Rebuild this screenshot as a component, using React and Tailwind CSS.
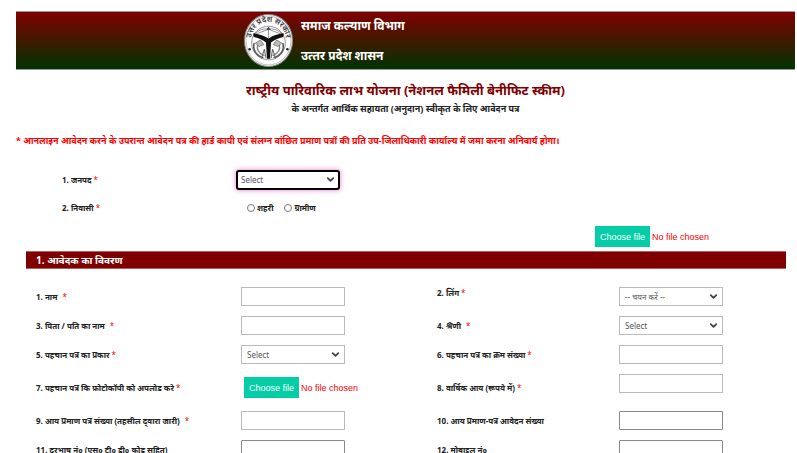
import { ChevronDown } from "lucide-react";

const rows = [
  {
    height: "h-[29px]",
    left: { id: "name", label: "1. नाम", required: true, wide: true, type: "text" },
    right: { id: "gender", label: "2. लिंग", required: true, labelTop: true, type: "select", option: "-- चयन करें --" },
  },
  {
    height: "h-[29px]",
    left: { id: "father", label: "3. पिता / पति का नाम", required: true, wide: true, type: "text" },
    right: { id: "category", label: "4. श्रेणी", required: true, wide: true, type: "select", option: "Select" },
  },
  {
    height: "h-[29px]",
    left: { id: "idType", label: "5. पहचान पत्र का प्रकार", required: true, type: "select", option: "Select" },
    right: { id: "idNumber", label: "6. पहचान पत्र का क्रम संख्या", required: true, type: "text" },
  },
  {
    height: "h-[37px]",
    left: { id: "idCopy", label: "7. पहचान पत्र कि फ़ोटोकॉपी को अपलोड करे", required: true, type: "file" },
    right: { id: "income", label: "8. वार्षिक आय (रूपये में)", required: true, controlTop: true, type: "text" },
  },
  {
    height: "h-[29px]",
    left: { id: "incomeCert", label: "9. आय प्रमाण पत्र संख्या (तहसील द्\u200cवारा जारी)", required: true, wide: true, type: "text" },
    right: { id: "incomeApp", label: "10. आय प्रमाण-पत्र आवेदन संख्या", type: "text", dark: true },
  },
  {
    height: "h-[29px]",
    left: { id: "phone", label: "11. दूरभाष नं० (एस० टी० डी० कोड सहित)", type: "text", dark: true },
    right: { id: "mobile", label: "12. मोबाइल नं०", type: "text", dark: true },
  },
];

function Emblem() {
  return (
    <svg viewBox="0 0 96 104" preserveAspectRatio="none" className="h-[53px] w-[49px] shrink-0" aria-hidden="true">
      <defs>
        <path id="ring" d="M15 60 A34 36 0 1 1 81 60" />
      </defs>
      <ellipse cx="48" cy="52" rx="47" ry="51" fill="#fff" stroke="#888" strokeWidth="2" />
      <ellipse cx="48" cy="52" rx="44" ry="48" fill="none" stroke="#888" strokeWidth="1" />
      <text fontSize="15" fontWeight="600" fill="#333" textAnchor="middle" fontFamily="Noto Sans, sans-serif">
        <textPath href="#ring" startOffset="50%">उत्तर प्रदेश सरकार</textPath>
      </text>
      <ellipse cx="48" cy="57" rx="33" ry="33" fill="#fff" stroke="#777" strokeWidth="1.5" />
      <path d="M19 41 Q34 26 48 30 Q62 26 77 41 M48 26 V48 M19 41 L48 30 L77 41" fill="none" stroke="#777" strokeWidth="1.5" />
      <path d="M44 31 L48 25 L52 31 Z" fill="#333" />
      <path d="M18 38 Q36 40 48 48 Q60 40 78 38 L77 45 Q62 48 53 56 L51 88 H45 L43 56 Q34 48 19 45 Z" fill="#111" />
      <path d="M20 57 C16 70 24 82 38 86" fill="none" stroke="#555" strokeWidth="3" />
      <path d="M27 60 C24 70 30 78 40 82" fill="none" stroke="#888" strokeWidth="3" />
      <path d="M76 57 C80 70 72 82 58 86" fill="none" stroke="#555" strokeWidth="3" />
      <path d="M69 60 C72 70 66 78 56 82" fill="none" stroke="#888" strokeWidth="3" />
      <path d="M22 57 L32 51 L39 60 L30 64 Z M74 57 L64 51 L57 60 L66 64 Z" fill="#bbb" stroke="#444" />
      <path d="M34 87 L40 69 L43 87 M62 87 L56 69 L53 87" fill="none" stroke="#666" strokeWidth="2" />
      <circle cx="11" cy="69" r="2.5" fill="#222" />
      <circle cx="85" cy="69" r="2.5" fill="#222" />
    </svg>
  );
}

function Star({ wide }) {
  return (
    <span className={wide ? "ml-[5px] font-normal text-[#f00]" : "ml-[2px] font-normal text-[#f00]"}>*</span>
  );
}

function SelectBox({ id, option, focused }) {
  return (
    <div className="relative w-[104px]">
      <select
        id={id}
        className={
          focused
            ? "block h-5 w-full appearance-none rounded-[3px] border-2 border-black bg-white pl-[3px] text-[8px] font-normal text-[#555] shadow-[0_0_4px_1px_#f0a0e0] outline-none"
            : "block h-[19px] w-full appearance-none border border-[#bbb] bg-white pl-[5px] text-[8px] font-normal text-[#555] outline-none"
        }
      >
        <option>{option}</option>
      </select>
      <ChevronDown className="pointer-events-none absolute right-1 top-1 size-[11px] text-[#444]" strokeWidth={4} />
    </div>
  );
}

function FileBox({ id, label }) {
  return (
    <label
      htmlFor={id}
      className="relative flex w-[116px] items-center gap-[2px] whitespace-nowrap font-['Liberation_Sans',sans-serif] text-[9px] font-normal"
    >
      <input id={id} type="file" aria-label={label} className="absolute inset-0 h-full w-full opacity-0" />
      <span className="flex h-[21px] w-[55px] items-center justify-center bg-[#05cda6] text-white">Choose file</span>
      <span className="text-[#f00]">No file chosen</span>
    </label>
  );
}

function Control({ field }) {
  if (field.type === "select") return <SelectBox id={field.id} option={field.option} />;
  if (field.type === "file") {
    return (
      <div className="pl-[3px]">
        <FileBox id={field.id} label={field.label} />
      </div>
    );
  }
  return (
    <input
      id={field.id}
      type="text"
      className={
        field.dark
          ? "block h-[19px] w-[104px] rounded-[1px] border border-[#888] bg-white px-1 text-[8px]"
          : "block h-[19px] w-[104px] border border-[#bbb] bg-white px-1 text-[8px]"
      }
    />
  );
}

function Field({ field }) {
  return (
    <>
      <label htmlFor={field.id} className={field.labelTop ? "self-start pt-[5px]" : ""}>
        {field.label}
        {field.required && <Star wide={field.wide} />}
      </label>
      <div className={field.controlTop ? "self-start pt-[5px]" : ""}>
        <Control field={field} />
      </div>
    </>
  );
}

export default function App() {
  return (
    <div className="min-h-screen bg-white pl-4 pr-[2px] pt-[11px] font-['Noto_Sans',sans-serif] text-[8px] leading-3 font-bold text-[#222]">
      <header className="flex h-[59px] items-center gap-2 border-y border-[#999] bg-linear-to-b/srgb from-[#800000] to-[#003300] pl-[228px] text-white">
        <Emblem />
        <div className="space-y-[14px] text-[12px] leading-4">
          <p>समाज कल्याण विभाग</p>
          <p>{"उत्\u200dतर प्रदेश शासन"}</p>
        </div>
      </header>

      <main>
        <div className="pt-3 text-center">
          <h1 className="text-[13px] leading-4 text-[#800000]">
            {"राष्\u200dट्रीय पारिवारिक लाभ योजना (नेशनल फैमिली बेनीफिट स्कीम)"}
          </h1>
          <p className="pt-[5px] text-[9px]">के अन्तर्गत आर्थिक सहायता (अनुदान) स्वीकृत के लिए आवेदन पत्र</p>
        </div>
        <p className="pt-5 text-[9px] text-[#f00]">
          * आनलाइन आवेदन करने के उपरान्त आवेदन पत्र की हार्ड कापी एवं संलग्न वांछित प्रमाण पत्रों की प्रति उप-जिलाधिकारी कार्याल्य में जमा करना अनिवार्य होगा।
        </p>

        <form className="pl-[10px] pr-[9px]">
          <div className="grid grid-cols-[174fr_550fr] items-center pl-9 pt-[19px]">
            <label htmlFor="district" className="flex h-7 items-center">
              1. जनपद
              <Star />
            </label>
            <SelectBox id="district" option="Select" focused />
            <span className="flex h-7 items-center">
              2. निवासी
              <Star />
            </span>
            <div className="flex gap-[11px] pl-[11px]">
              <label className="flex items-center gap-[2px]">
                <input type="radio" name="area" className="size-2" />
                शहरी
              </label>
              <label className="flex items-center gap-[2px]">
                <input type="radio" name="area" className="size-2" />
                ग्रामीण
              </label>
            </div>
          </div>

          <div className="grid grid-cols-[569fr_191fr] pb-1 pt-1">
            <div className="col-start-2">
              <FileBox id="photo" label="फोटो" />
            </div>
          </div>

          <h2 className="flex h-[18px] items-center border-y border-[#b06060] bg-[#800000] pl-[10px] text-[10px] text-white">
            1. आवेदक का विवरण
          </h2>

          <div className="pl-[10px] pt-[13px]">
            {rows.map((row) => (
              <div key={row.left.id} className={`grid grid-cols-[205fr_196fr_182fr_167fr] items-center ${row.height}`}>
                <Field field={row.left} />
                <Field field={row.right} />
              </div>
            ))}
          </div>
        </form>
      </main>
    </div>
  );
}
